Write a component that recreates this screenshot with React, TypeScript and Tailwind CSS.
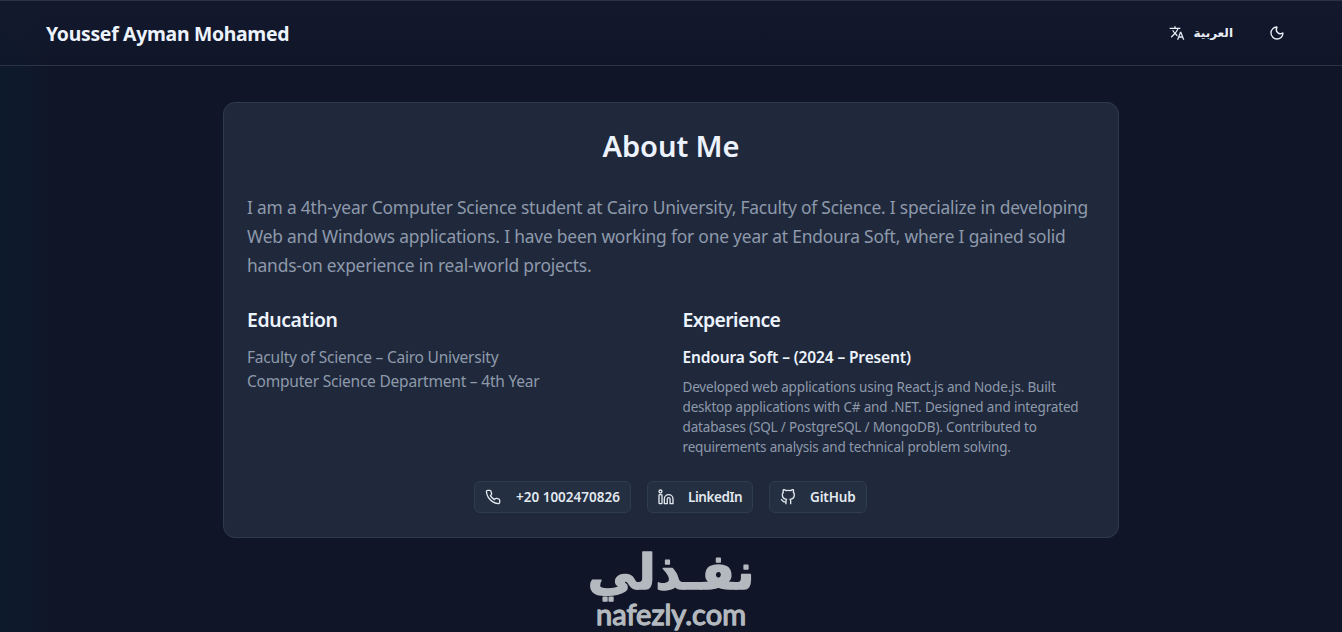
import { Moon } from "lucide-react";
import { FiGithub } from "react-icons/fi";
import type { ReactNode } from "react";

const PHONE = "+20 1002470826";

function TranslateIcon() {
  return (
    <svg viewBox="0 0 24 24" className="size-4" fill="currentColor" aria-hidden>
      <path d="M12.87 15.07l-2.54-2.51.03-.03A17.52 17.52 0 0 0 14.07 6H17V4h-7V2H8v2H1v2h11.17C11.5 7.92 10.44 9.75 9 11.35 8.07 10.32 7.3 9.19 6.69 8h-2c.73 1.63 1.73 3.17 2.98 4.56l-5.09 5.02L4 19l5-5 3.11 3.11.76-2.04zM18.5 10h-2L12 22h2l1.12-3h4.75L21 22h2l-4.5-12zm-2.62 7l1.62-4.33L19.12 17h-3.24z" />
    </svg>
  );
}

function PhoneIcon() {
  return (
    <svg
      viewBox="0 0 24 24"
      className="size-4"
      fill="none"
      stroke="currentColor"
      strokeWidth="2"
      strokeLinecap="round"
      strokeLinejoin="round"
      aria-hidden
    >
      <path d="M22 16.92v3a2 2 0 0 1-2.18 2 19.79 19.79 0 0 1-8.63-3.07 19.5 19.5 0 0 1-6-6 19.79 19.79 0 0 1-3.07-8.67A2 2 0 0 1 4.11 2h3a2 2 0 0 1 2 1.72 12.84 12.84 0 0 0 .7 2.81 2 2 0 0 1-.45 2.11L8.09 9.91a16 16 0 0 0 6 6l1.27-1.27a2 2 0 0 1 2.11-.45 12.84 12.84 0 0 0 2.81.7A2 2 0 0 1 22 16.92z" />
    </svg>
  );
}

function LinkedInIcon() {
  return (
    <svg
      viewBox="0 0 24 24"
      className="size-4"
      fill="none"
      stroke="currentColor"
      strokeWidth="2"
      strokeLinejoin="round"
      aria-hidden
    >
      <rect x="1.5" y="8.5" width="4.5" height="13.5" rx="1" />
      <circle cx="3.75" cy="3.75" r="2.2" />
      <path d="M9.5 22V15a6.5 6.5 0 0 1 13 0v7h-4.4v-7a2.1 2.1 0 0 0-4.2 0v7z" />
    </svg>
  );
}

function ContactLink({
  icon,
  className,
  children,
}: {
  icon: ReactNode;
  className: string;
  children: ReactNode;
}) {
  return (
    <a
      href="#"
      className={`flex h-8 items-center whitespace-nowrap rounded-md border border-[#2e3d4f] bg-[#243041] pl-[10px] text-[13.5px] font-semibold text-[#e2e8f0] ${className}`}
    >
      {icon}
      <span>{children}</span>
    </a>
  );
}

function Header() {
  return (
    <header className="flex h-[66px] items-center justify-between border-y border-[#2b3345] bg-linear-to-b from-[#14192e]/80 to-[#101628]/40 pl-[46px] pr-[57px]">
      <h1 className="whitespace-nowrap pt-0.5 text-[19.4px] font-bold tracking-[-0.3px] text-[#edf3fd]">
        Youssef Ayman Mohamed
      </h1>
      <div className="flex items-center text-[#e8edf7]">
        <button type="button" className="flex items-center gap-2">
          <TranslateIcon />
          <span lang="ar" className="font-['DejaVu_Sans'] text-xs font-bold">
            العربية
          </span>
        </button>
        <button type="button" className="ml-9" aria-label="Toggle theme">
          <Moon className="size-4" />
        </button>
      </div>
    </header>
  );
}

function Watermark() {
  return (
    <svg
      width="170"
      height="93"
      viewBox="0 0 170 93"
      className="mx-auto block"
      fill="#b4b9bf"
      stroke="#b4b9bf"
      strokeLinejoin="round"
      aria-hidden
    >
      <text
        x="85"
        y="51"
        direction="rtl"
        textAnchor="middle"
        fontFamily="DejaVu Sans"
        fontWeight="700"
        fontSize="49"
        strokeWidth="1.6"
      >
        نفـذلي
      </text>
      <text
        x="10"
        y="87"
        fontFamily="Lato"
        fontWeight="400"
        fontSize="29"
        strokeWidth="1.3"
        textLength="150"
        lengthAdjust="spacingAndGlyphs"
      >
        nafezly.com
      </text>
    </svg>
  );
}

export default function App() {
  return (
    <div className="h-[632px] overflow-hidden bg-[#101628] bg-[linear-gradient(to_right,#0d1a2a,#0e192a_28px,#101628_50px)] font-['Noto_Sans','Open_Sans',sans-serif]">
      <Header />
      <main className="pt-9">
        <section className="mx-auto h-[436px] w-4xl rounded-xl border border-[#2f3a4c] bg-[#20293b] px-6 pt-[25px]">
          <h2 className="text-center text-[29.1px]/9 font-semibold tracking-[-0.1px] text-[#edf3fd]">
            About Me
          </h2>
          <p className="-ml-px mt-[29px] whitespace-nowrap text-[17.4px]/[29px] tracking-[-0.2px] text-[#8e99ab]">
            I am a 4th-year Computer Science student at Cairo University,
            Faculty of Science. I specialize in developing
            <br />
            Web and Windows applications. I have been working for one year at
            Endoura Soft, where I gained solid
            <br />
            hands-on experience in real-world projects.
          </p>
          <div className="-ml-px mt-[26px] grid grid-cols-2 gap-6">
            <div>
              <h3 className="text-[19.4px]/7 font-semibold tracking-[-0.4px] text-[#edf3fd]">
                Education
              </h3>
              <p className="mt-[11px] text-[15.5px]/6 tracking-[-0.21px] text-[#8e99ab]">
                Faculty of Science – Cairo University
                <br />
                Computer Science Department – 4th Year
              </p>
            </div>
            <div>
              <h3 className="text-[19.4px]/7 font-semibold tracking-[-0.6px] text-[#edf3fd]">
                Experience
              </h3>
              <p className="mt-[11px] text-[15.5px]/6 font-semibold tracking-[-0.13px] text-[#edf3fd]">
                Endoura Soft – (2024 – Present)
              </p>
              <p className="mt-2 whitespace-nowrap text-[13.5px]/5 tracking-[-0.17px] text-[#8e99ab]">
                Developed web applications using React.js and Node.js. Built
                <br />
                desktop applications with C# and .NET. Designed and integrated
                <br />
                databases (SQL / PostgreSQL / MongoDB). Contributed to
                <br />
                requirements analysis and technical problem solving.
              </p>
            </div>
          </div>
          <div className="-ml-px mt-6 flex justify-center gap-4">
            <ContactLink icon={<PhoneIcon />} className="w-[157px] gap-[15px]">
              {PHONE}
            </ContactLink>
            <ContactLink
              icon={<LinkedInIcon />}
              className="w-[106px] gap-[14px] tracking-[-0.45px]"
            >
              LinkedIn
            </ContactLink>
            <ContactLink
              icon={<FiGithub className="size-4" />}
              className="w-[98px] gap-[14px] tracking-[-0.15px]"
            >
              GitHub
            </ContactLink>
          </div>
        </section>
        <Watermark />
      </main>
    </div>
  );
}
